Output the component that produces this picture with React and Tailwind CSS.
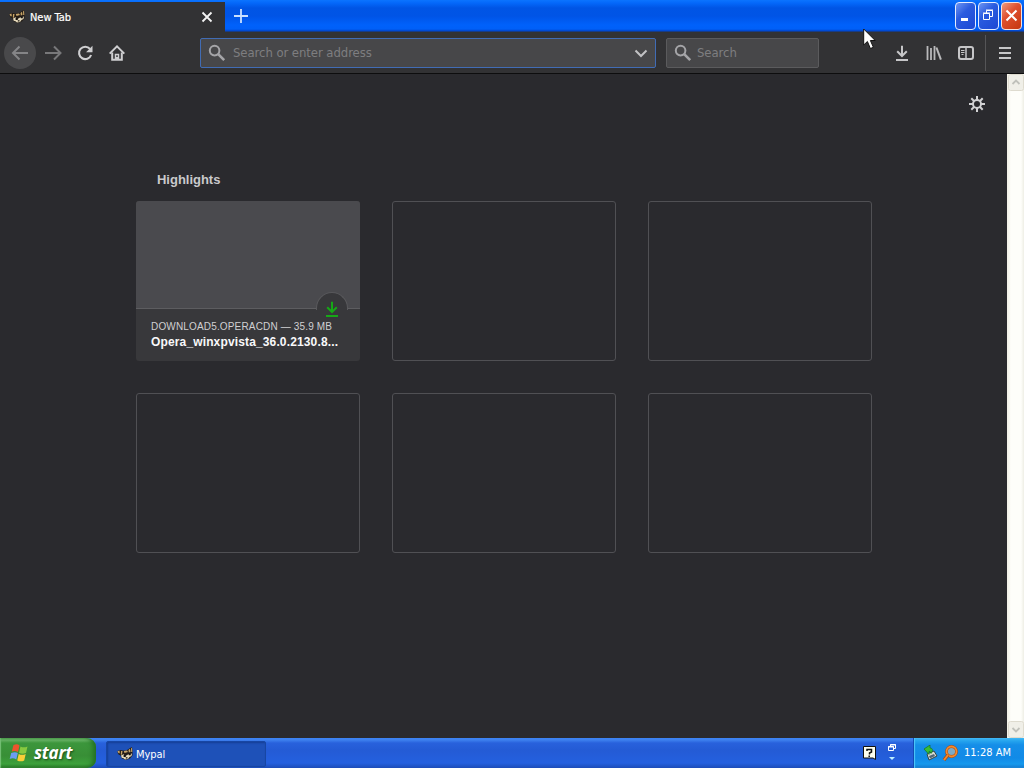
import React from "react";

function Raccoon({ className = "" }) {
  return (
    <svg className={className} width="16" height="16" viewBox="0 0 16 16">
      <path d="M0.500 5 3 4 6 4.500 9 4.500 11 3.500 13 2 15 1 15.500 5 15.500 9.500 13 12.500 9 14 5 12.500 3.500 9.500 1 8Z" fill="#241d17" />
      <path d="M0.500 5.200 2.500 4.600 2.800 7.300 1.500 7.300ZM4 5 5.500 5 5 8.800 3.800 8.500ZM6.800 5 10 4.500 11 6 7.500 7ZM11.500 4 13 2.800 13.500 6 11.800 6.500ZM14 2.500 15 1.500 15.300 6 14.200 6Z" fill="#c6a468" />
      <path d="M4 9.500 6.500 8.300 8.500 10 11 8.500 13 8 15 7.500 14.500 10 12.500 11 11 13 8 13.600 6.500 12.200 4.700 11.800Z" fill="#e6dabb" />
      <path d="M6.600 9h2.200v1.900H6.600ZM11.800 7.500h2v1.800h-2ZM8.800 11.300h1.700v1.100H8.800Z" fill="#15120f" />
    </svg>
  );
}

function SearchIcon() {
  return (
    <svg className="shrink-0" width="18" height="18" viewBox="0 0 18 18" fill="none" stroke="#a5a5a8" strokeWidth="2">
      <circle cx="6.6" cy="6.6" r="4.8" />
      <path d="m10.2 10.2 6 6" strokeWidth="2.6" />
    </svg>
  );
}

function Download({ color, size = 16 }) {
  return (
    <svg width={size} height={size} viewBox="0 0 16 16" fill="none" stroke={color} strokeWidth="2">
      <path d="M8 0.8v10M3.2 6.3 8 11l4.8-4.7" />
      <path d="M2 15h12" />
    </svg>
  );
}

function TitleBar() {
  return (
    <header className="flex h-8 shrink-0 bg-[linear-gradient(to_bottom,#0b74ff_0,#0468fa_3px,#0055e5_8px,#0054e6_16px,#0061fb_25px,#0060f8_29px,#0044cb_31px,#2e3443_32px)]">
      <div className="mt-0.5 flex h-[30px] w-[225px] items-center bg-[#323234] pl-[9px] pr-[11px]">
        <Raccoon />
        <span className="ml-[5px] mt-[2px] whitespace-nowrap font-['DejaVu_Sans_Condensed','DejaVu_Sans',sans-serif] text-[11px] leading-4 tracking-[-0.05px] text-white [-webkit-text-stroke:0.2px_white]">New Tab</span>
        <svg className="ml-auto" width="14" height="14" viewBox="0 0 14 14" stroke="#f4f4f4" strokeWidth="1.8">
          <path d="m2.5 2.5 9 9M11.5 2.5l-9 9" />
        </svg>
      </div>
      <svg className="ml-[9px] mt-[9px]" width="14" height="14" viewBox="0 0 14 14" stroke="#c9e0ff" strokeWidth="1.8">
        <path d="M7 0v14M0 7h14" />
      </svg>
      <div className="ml-auto mr-[2px] mt-[2px] flex gap-[2px]">
        <div className="flex h-[28px] w-[21px] items-center justify-center rounded-[4px] border border-[#e5edff] bg-[linear-gradient(135deg,#6d95f2,#2a5bdf_40%,#1d48d4)]">
          <svg width="19" height="26" viewBox="0 0 19 26"><path d="M5 15h7v3H5Z" fill="#fff" /></svg>
        </div>
        <div className="flex h-[28px] w-[21px] items-center justify-center rounded-[4px] border border-[#e5edff] bg-[linear-gradient(135deg,#6d95f2,#2a5bdf_40%,#1d48d4)]">
          <svg width="19" height="26" viewBox="0 0 19 26" fill="none" stroke="#fff">
            <path d="M7.500 10V7.500h6v6H11M7 7h7" /><path d="M4.500 10.500h6v6h-6ZM4 10h7" />
          </svg>
        </div>
        <div className="flex h-[28px] w-[21px] items-center justify-center rounded-[4px] border border-[#f7e2dc] bg-[linear-gradient(135deg,#ee9a7e,#df5130_40%,#c5360f)]">
          <svg width="19" height="26" viewBox="0 0 19 26" stroke="#fff" strokeWidth="2.1"><path d="m4.500 7.500 10 10M14.500 7.500l-10 10" /></svg>
        </div>
      </div>
    </header>
  );
}

function Toolbar() {
  return (
    <nav className="flex h-[42px] shrink-0 items-center border-b border-[#0d0d0e] bg-[#323234] pl-1">
      <div className="flex h-8 w-8 items-center justify-center rounded-full bg-[#49494b]">
        <svg width="18" height="16" viewBox="0 0 18 16" fill="none" stroke="#858587" strokeWidth="2"><path d="M17 8H2M8.500 1.500 2 8l6.500 6.500" /></svg>
      </div>
      <svg className="ml-[9px]" width="18" height="16" viewBox="0 0 18 16" fill="none" stroke="#78787a" strokeWidth="2"><path d="M0 8h15M9 1.500 15.500 8 9 14.500" /></svg>
      <svg className="ml-[14px]" width="16" height="16" viewBox="0 0 16 16" fill="none" stroke="#cfcfd1" strokeWidth="2.1">
        <path d="M13 3.900A6.200 6.200 0 1 0 14.100 10" /><path d="M15.500 0.800v6.400H9.100Z" fill="#cfcfd1" stroke="none" />
      </svg>
      <svg className="ml-4" width="16" height="16" viewBox="0 0 16 16" fill="none" stroke="#cfcfd1" strokeWidth="2">
        <path d="m0.700 8.600 7.300-7.200 7.300 7.200" /><path d="M3.200 7.500v7.300h9.600V7.500" /><path d="M6.500 15V9.500h3V15M8 12v3" strokeWidth="1.500" />
      </svg>
      <div className="ml-[75px] flex h-[30px] w-[456px] items-center rounded-[2px] border border-[#416cb4] bg-[#474749] pl-[7px] pr-[7px]">
        <SearchIcon />
        <span className="ml-[7px] mt-px whitespace-nowrap font-['DejaVu_Sans_Condensed','DejaVu_Sans',sans-serif] text-[13px] leading-4 tracking-[-0.07px] text-[#7e7e80]">Search or enter address</span>
        <svg className="ml-auto" width="14" height="14" viewBox="0 0 14 14" fill="none" stroke="#c2c2c4" strokeWidth="2"><path d="m1.500 4.500 5.500 5.500 5.500-5.500" /></svg>
      </div>
      <div className="ml-[10px] flex h-[30px] w-[153px] items-center rounded-[2px] border border-[#5b5b5d] bg-[#474749] pl-[7px]">
        <SearchIcon />
        <span className="ml-[5px] mt-px whitespace-nowrap font-['DejaVu_Sans_Condensed','DejaVu_Sans',sans-serif] text-[13px] leading-4 tracking-[-0.07px] text-[#7e7e80]">Search</span>
      </div>
      <div className="ml-auto flex h-full items-center pr-3">
        <Download color="#c6c6c8" />
        <svg className="ml-4" width="16" height="16" viewBox="0 0 16 16" fill="none" stroke="#b9b9bb" strokeWidth="2">
          <path d="M1.500 1v14M5 3v12M8.500 1v14" strokeWidth="1.800" /><path d="m10.400 2.500 4.500 12.200" />
        </svg>
        <svg className="ml-4" width="16" height="16" viewBox="0 0 16 16" fill="none" stroke="#c6c6c8">
          <rect x="1" y="2" width="14" height="12" rx="2" strokeWidth="2" /><path d="M8 2v12" strokeWidth="1.500" /><path d="M3 5.500h3.500M3 7.500h3.500M3.500 9.500h2" />
        </svg>
        <div className="ml-[11px] h-9 w-px bg-[#555557]" />
        <svg className="ml-[12px]" width="14" height="14" viewBox="0 0 14 14" stroke="#c6c6c8" strokeWidth="2"><path d="M1 2h12M1 7h12M1 12h12" /></svg>
      </div>
    </nav>
  );
}

function EmptyCard() {
  return <div className="h-40 rounded-[3px] border border-[#505054]" />;
}

function HighlightCard() {
  return (
    <article className="relative h-40 overflow-hidden rounded-[3px] bg-[#38383b]">
      <div className="h-[108px] border-b border-[#5d5d60] bg-[#4a4a4e]" />
      <div className="absolute right-3 top-[91px] flex h-[18px] w-8 justify-center overflow-visible rounded-t-full border border-b-0 border-[#59595c] bg-[#38383b] pt-2">
        <span className="h-4 w-4 shrink-0"><Download color="#16a816" /></span>
      </div>
      <div className="relative whitespace-nowrap pl-[15px] pt-[11px] font-['Liberation_Sans',Arial,sans-serif]">
        <div className="h-[14px] text-[10px] leading-[14px] tracking-[0.16px] text-[#d0d0d2]">DOWNLOAD5.OPERACDN — 35.9 MB</div>
        <div className="text-[12px] font-bold leading-4 tracking-[0.14px] text-[#f9f9fa]">Opera_winxpvista_36.0.2130.8...</div>
      </div>
    </article>
  );
}

function ScrollBar() {
  return (
    <div className="flex w-[17px] shrink-0 flex-col justify-between bg-[linear-gradient(to_right,#f2f0e6,#fefefa_4px,#fefefa_14px,#eeeee5)]">
      {["M3.500 8 7 4.500 10.500 8", "M3.500 5 7 8.500 10.500 5"].map((path) => (
        <svg key={path} className="ml-px" width="16" height="17" viewBox="0 0 16 17" fill="none">
          <rect x="0.500" y="0.500" width="15" height="16" rx="2" fill="#f0efe8" stroke="#dedbcf" />
          <path d={path} transform="translate(1 2)" stroke="#c0c1bb" strokeWidth="1.800" />
        </svg>
      ))}
    </div>
  );
}

function WindowsFlag() {
  return (
    <svg width="20" height="20" viewBox="0 0 20 20">
      <path d="M4.500 2q4-1.500 6 .500L9 9Q6 7.500 2.800 8.500Z" fill="#ed542d" />
      <path d="M11.500 3.500q3 1.700 7 0L17 10q-3.500 1.500-7 0Z" fill="#87c940" />
      <path d="M2.200 10Q6 8.500 8.800 10l-1.500 6.500Q4 14.500.7 16Z" fill="#6c9df3" />
      <path d="M9.700 11q3.500 1.700 7 0l-1.500 6.500q-3.500 1.700-7 0Z" fill="#f9ce38" />
    </svg>
  );
}

function TaskBar() {
  return (
    <footer className="flex h-[30px] shrink-0 bg-[linear-gradient(to_bottom,#3c83f4_0,#3d80ee_2px,#2861dc_5px,#245bd5_12px,#2460df_25px,#1c4cb8_30px)] font-['DejaVu_Sans_Condensed','DejaVu_Sans',sans-serif] text-[11px] text-white">
      <div className="flex w-24 items-center rounded-r-[9px] bg-[linear-gradient(to_bottom,#4f9d4f_0,#67b365_2px,#3c963c_5px,#388f36_18px,#3ca13b_26px,#287727_30px)] pl-[9px] shadow-[inset_-5px_0_5px_-2px_#226f23,inset_1px_0_1px_#77c177]">
        <WindowsFlag />
        <span className="ml-[5px] font-['Open_Sans','Noto_Sans',sans-serif] text-[17px] font-bold italic leading-5 tracking-[-0.2px] [text-shadow:1px_1px_2px_#174d18]">start</span>
      </div>
      <div className="ml-[10px] mt-[3px] flex h-[26px] w-40 items-center rounded-[2px] border border-[#1746a3] bg-[#1e51b8] pl-[10px] shadow-[inset_1px_1px_2px_#153d96]">
        <Raccoon />
        <span className="ml-[3px] mt-[2px] tracking-[-0.08px]">Mypal</span>
      </div>
      <div className="ml-auto mr-4 flex items-center">
        <svg className="mr-[11px]" width="14" height="16" viewBox="0 0 14 16">
          <path d="M1.500 1.500h12v13l-2.500-1.500h-9.500Z" fill="#fffff0" stroke="#111" />
          <path d="M5 6V4.500h4.500V7l-2 1v1.500M7.200 10.500V12" fill="none" stroke="#111" strokeWidth="1.500" />
        </svg>
        <svg width="10" height="20" viewBox="0 0 10 20" fill="none" stroke="#fff">
          <path d="M3.500 3V1.500h5v4H7M3 2h6M1.500 3.500h5v4h-5ZM1 4h6" /><path d="M2 14h6l-3 3Z" fill="#bdefff" stroke="none" />
        </svg>
      </div>
      <div className="flex w-[111px] items-center border-l border-[#124bb5] bg-[linear-gradient(to_bottom,#3fb6f5_0,#25a4ee_3px,#158ee8_7px,#118ae7_20px,#1598ed_26px,#1479cd_30px)] pl-[9px] shadow-[inset_1px_0_1px_#50c9fb]">
        <svg width="16" height="16" viewBox="0 0 16 16">
          <path d="m4 9 7-3 3 5-8 4Z" fill="#d8ddd5" stroke="#344546" /><path d="m6 11 5-2 1 2-5 2.500Z" fill="#536676" />
          <path d="M1 4 7 0v3c3 0 3 3 1 5.500-.500-2-1-2-2-2v3Z" fill="#39be36" stroke="#147225" strokeWidth=".700" />
        </svg>
        <svg className="ml-[3px]" width="16" height="17" viewBox="0 0 16 17" fill="none">
          <circle cx="9.500" cy="6.500" r="5" fill="#7eaac4" stroke="#a74913" strokeWidth="2.800" /><circle cx="9.500" cy="6.500" r="5" stroke="#f38a2d" strokeWidth="1.800" />
          <path d="m6 10-4 5" stroke="#a74913" strokeWidth="3.500" /><path d="m6 10-4 5" stroke="#f38a2d" strokeWidth="2" />
        </svg>
        <span className="ml-[6px] mt-px whitespace-nowrap tracking-[0px]">11:28 AM</span>
      </div>
    </footer>
  );
}

export default function App() {
  return (
    <div className="relative flex h-[768px] w-[1024px] flex-col overflow-hidden bg-[#2a2a2e]">
      <TitleBar />
      <Toolbar />
      <div className="flex min-h-0 flex-1">
        <main className="flex min-w-0 flex-1 flex-col">
          <div className="flex h-[98px] shrink-0 justify-end pr-[22px] pt-[22px]">
            <svg width="16" height="16" viewBox="0 0 16 16" fill="none" stroke="#d2d2d4" strokeWidth="2">
              <circle cx="8" cy="8" r="4" /><path d="M8 0v4M8 12v4M0 8h4M12 8h4M2.300 2.300l2.900 2.900M10.800 10.800l2.900 2.900M13.700 2.300l-2.900 2.900M5.200 10.800l-2.900 2.900" />
            </svg>
          </div>
          <h1 className="ml-[157px] h-[29px] font-['Liberation_Sans',Arial,sans-serif] text-[13px] font-bold leading-4 tracking-[-0.020px] text-[#c9c9cc]">Highlights</h1>
          <section className="ml-[136px] grid w-[736px] grid-cols-3 gap-8">
            <HighlightCard />
            <EmptyCard /><EmptyCard /><EmptyCard /><EmptyCard /><EmptyCard />
          </section>
        </main>
        <ScrollBar />
      </div>
      <TaskBar />
      <svg className="absolute left-[863px] top-[28px]" width="13" height="22" viewBox="0 0 13 22">
        <path d="M.700 1v16l3.700-3.500 3 7 3-1.200-3-6.800h4.800Z" fill="#fff" stroke="#111" />
      </svg>
    </div>
  );
}
